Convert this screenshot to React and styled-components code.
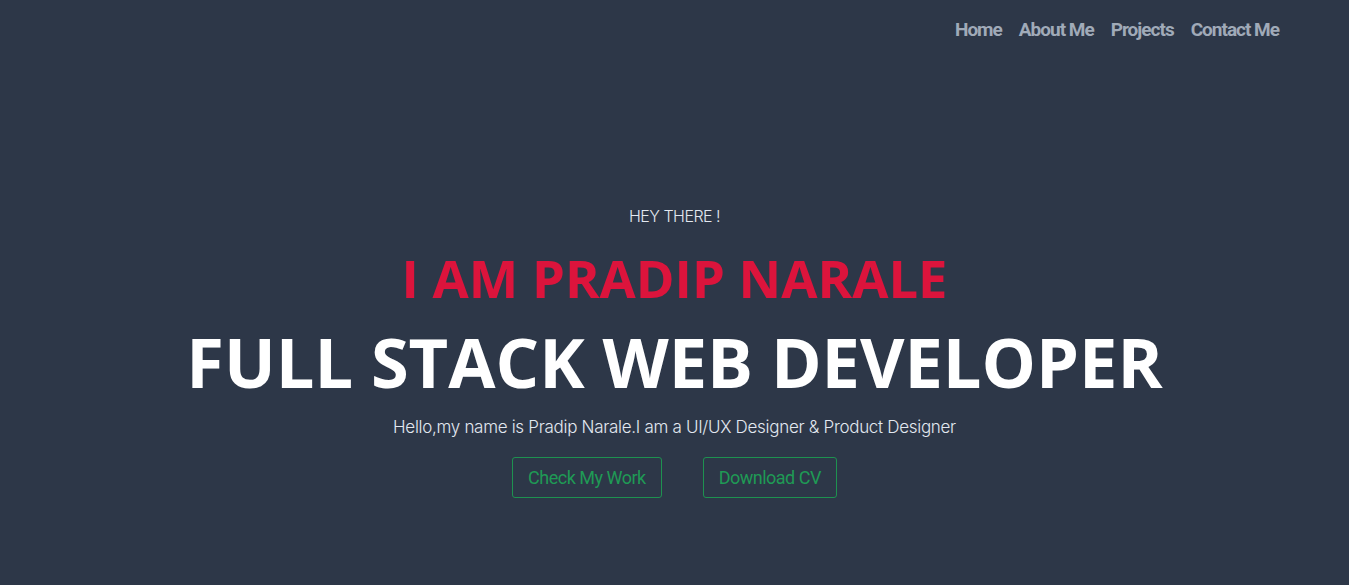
import React from "react";
import styled, { createGlobalStyle } from "styled-components";

const Global = createGlobalStyle`
  html, body { margin: 0; padding: 0; background: #2d3748; }
  * { box-sizing: border-box; }
`;

const Page = styled.div`
  min-height: 100vh;
  background: #2d3748;
  display: flex;
  flex-direction: column;
`;

const Nav = styled.nav`
  display: flex;
  justify-content: flex-end;
  gap: 17px;
  padding: 18px 70px 0 0;
`;

const NavLink = styled.a`
  font-family: Roboto, sans-serif;
  font-weight: 700;
  font-size: 19px;
  color: #a0aab8;
  text-decoration: none;
  letter-spacing: -1px;
`;

const Hero = styled.section`
  display: flex;
  flex-direction: column;
  align-items: center;
  padding-top: 165px;
  color: #fff;
  text-align: center;
`;

const Greeting = styled.p`
  margin: 0;
  font-family: Inter, sans-serif;
  font-weight: 300;
  font-size: 16px;
  letter-spacing: -0.5px;
  color: #e2e8f0;
`;

const Name = styled.h2`
  margin: 20px 0 0;
  font-family: "Open Sans", sans-serif;
  font-weight: 700;
  font-size: 52.5px;
  line-height: 1.2;
  color: #dc143c;
`;

const Role = styled.h1`
  margin: 12px 0 0;
  font-family: "Open Sans", sans-serif;
  font-weight: 700;
  font-size: 68.5px;
  line-height: 1.2;
  color: #ffffff;
`;

const Intro = styled.p`
  margin: 14px 0 0;
  font-family: Inter, sans-serif;
  font-weight: 300;
  font-size: 17px;
  letter-spacing: -0.3px;
  color: #e2e8f0;
`;

const Buttons = styled.div`
  display: flex;
  gap: 41px;
  margin-top: 20px;
`;

const Button = styled.a`
  display: inline-flex;
  align-items: center;
  justify-content: center;
  height: 41px;
  padding: 0 15px;
  border: 1px solid #1e9150;
  border-radius: 3px;
  font-family: Roboto, sans-serif;
  font-weight: 400;
  font-size: 18px;
  color: #1f9a55;
  text-decoration: none;
  letter-spacing: -0.5px;
`;

export default function App() {
  return (
    <Page>
      <Global />
      <Nav>
        <NavLink href="#">Home</NavLink>
        <NavLink href="#">About Me</NavLink>
        <NavLink href="#">Projects</NavLink>
        <NavLink href="#">Contact Me</NavLink>
      </Nav>
      <Hero>
        <Greeting>HEY THERE !</Greeting>
        <Name>I AM PRADIP NARALE</Name>
        <Role>FULL STACK WEB DEVELOPER</Role>
        <Intro>Hello,my name is Pradip Narale.I am a UI/UX Designer &amp; Product Designer</Intro>
        <Buttons>
          <Button href="#">Check My Work</Button>
          <Button href="#">Download CV</Button>
        </Buttons>
      </Hero>
    </Page>
  );
}
